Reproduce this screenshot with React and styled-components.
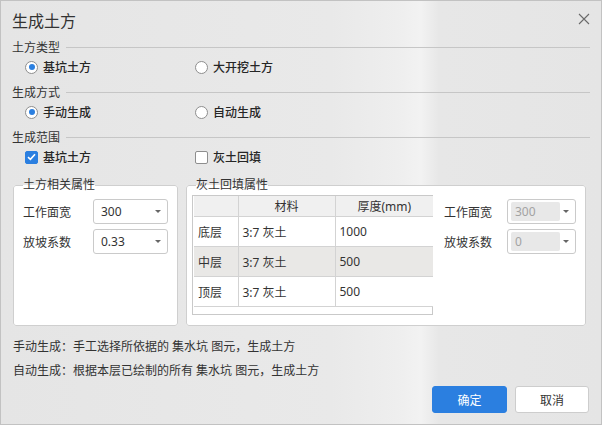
import React from 'react'
import styled, { createGlobalStyle } from 'styled-components'

const GlobalStyle = createGlobalStyle`
  html, body {
    margin: 0;
    padding: 0;
  }
  body {
    font-family: "Noto Sans", "Noto Sans CJK SC", sans-serif;
    color: #333;
  }
`

const Window = styled.div`
  box-sizing: border-box;
  width: 602px;
  height: 425px;
  border: 1px solid #c2c2c2;
  padding: 0 11px;
  background: linear-gradient(90deg, #e5e5e5 0%, #e9e9e9 55%, #eeeeee 66%, #f2f2f2 70%, #e7e7e7 73%, #e5e5e5 100%);
  display: flex;
  flex-direction: column;
  overflow: hidden;
`

const TitleBar = styled.div`
  height: 38px;
  display: flex;
  align-items: center;
  justify-content: space-between;
`

const Title = styled.div`
  font-size: 16px;
  color: #333;
`

const CloseButton = styled.button`
  border: 0;
  background: none;
  padding: 0;
  margin-right: -2px;
  width: 14px;
  height: 14px;
  display: flex;
  cursor: pointer;
`

const SectionHeader = styled.div`
  display: flex;
  align-items: center;
  height: 16px;
  font-size: 12px;
  margin-top: ${p => p.$top || 0}px;

  &::after {
    content: '';
    flex: 1;
    height: 1px;
    background: #c6c6c6;
    margin-left: 6px;
  }
`

const OptionRow = styled.div`
  display: grid;
  grid-template-columns: 170px 1fr;
  height: 24px;
  align-items: center;
  padding-left: 13px;
`

const Option = styled.label`
  display: flex;
  align-items: center;
  font-size: 12px;
  font-weight: 500;
  color: #262626;
  gap: 5px;
`

const RadioMark = styled.span`
  box-sizing: border-box;
  width: 13px;
  height: 13px;
  border-radius: 50%;
  border: 1px solid #8e8e8e;
  background: #fff;
  display: flex;
  align-items: center;
  justify-content: center;

  &::after {
    content: '';
    width: 6px;
    height: 6px;
    border-radius: 50%;
    background: ${p => (p.$checked ? '#2b7fe0' : 'transparent')};
  }
`

const CheckMark = styled.span`
  box-sizing: border-box;
  width: 13px;
  height: 13px;
  border-radius: 2px;
  border: 1px solid ${p => (p.$checked ? '#2b7fe0' : '#8e8e8e')};
  background: ${p => (p.$checked ? '#2b7fe0' : '#fff')};
  display: flex;
  align-items: center;
  justify-content: center;
`

const Groups = styled.div`
  display: flex;
  gap: 8px;
  margin: 8px 4px 0 1px;
`

const Group = styled.fieldset`
  box-sizing: border-box;
  margin: 0;
  padding: 0 9px 0 9px;
  min-width: 0;
  height: 149px;
  width: ${p => p.$width}px;
  flex: ${p => (p.$grow ? 1 : 'none')};
  border: 1px solid #cfcfcf;
  border-radius: 3px;
  background: #fff;
  display: ${p => (p.$row ? 'flex' : 'block')};
  align-items: flex-start;
`

const Legend = styled.legend`
  padding: 0;
  margin-left: 0;
  font-size: 12px;
  line-height: 16px;
  color: #333;
`

const FieldList = styled.div`
  display: flex;
  flex-direction: column;
  gap: 5px;
  padding-top: 6px;
`

const Field = styled.div`
  display: flex;
  align-items: center;
`

const FieldLabel = styled.span`
  width: ${p => p.$width}px;
  font-size: 12px;
  color: #333;
`

const Select = styled.div`
  box-sizing: border-box;
  width: ${p => p.$width}px;
  height: 25px;
  border: 1px solid #cacaca;
  border-radius: 3px;
  background: #fff;
  display: flex;
  align-items: center;
  padding: 0 6px 0 ${p => (p.$disabled ? 3 : 7)}px;
  font-size: 12px;
  color: #333;

  &::after {
    content: '';
    margin-left: auto;
    border-left: 3px solid transparent;
    border-right: 3px solid transparent;
    border-top: 3px solid #666;
  }
`

const DisabledValue = styled.span`
  flex: 0 0 49px;
  height: 19px;
  border-radius: 2px;
  background: #e8e8e8;
  color: #a3a3a3;
  display: flex;
  align-items: center;
  padding-left: 4px;
  box-sizing: border-box;
`

const TableFrame = styled.div`
  box-sizing: border-box;
  width: 241px;
  height: 120px;
  margin: 2px 0 0 -4px;
  border: 1px solid #c9c9c9;
  padding: 0 0 0 1px;
  background: #fff;
`

const Table = styled.table`
  border-collapse: collapse;
  width: 239px;
  font-size: 12px;
  color: #333;
  border-bottom: 1px solid #c9c9c9;

  th, td {
    border: 1px solid #d3d3d3;
    padding: 0 0 0 4px;
    text-align: left;
    font-weight: normal;
  }
  th {
    height: 20px;
    background: #f0f0f0;
    text-align: center;
    padding: 0;
  }
  td {
    height: 29px;
  }
  tr:first-child th {
    border-top: 0;
  }
  tr > *:first-child {
    border-left: 0;
  }
  tr > *:last-child {
    border-right: 0;
  }
`

const Row = styled.tr`
  background: ${p => (p.$shade ? '#e9e8e6' : '#fff')};
`

const SideFields = styled(FieldList)`
  margin-left: 11px;
`

const Note = styled.div`
  font-size: 12px;
  line-height: 24px;
  color: #333;
  padding-left: 1px;
  margin-top: ${p => p.$top || 0}px;
  white-space: pre;
`

const Actions = styled.div`
  display: flex;
  justify-content: flex-end;
  gap: 8px;
  margin: 3px 1px 0 0;
`

const Button = styled.button`
  box-sizing: border-box;
  width: ${p => p.$width}px;
  height: 27px;
  border-radius: 3px;
  font-family: inherit;
  font-size: 12px;
  border: 1px solid ${p => (p.$primary ? '#2b7fe0' : '#cdcdcd')};
  background: ${p => (p.$primary ? '#2b7fe0' : '#fff')};
  color: ${p => (p.$primary ? '#fff' : '#333')};
  cursor: pointer;
`

const Radio = ({ checked, children }) => (
  <Option>
    <RadioMark $checked={checked} />
    {children}
  </Option>
)

const Checkbox = ({ checked, children }) => (
  <Option>
    <CheckMark $checked={checked}>
      {checked && (
        <svg width="9" height="8" viewBox="0 0 9 8">
          <path d="M1 4.2 L3.4 6.4 L8 1.2" fill="none" stroke="#fff" strokeWidth="1.6" />
        </svg>
      )}
    </CheckMark>
    {children}
  </Option>
)

const layers = [
  { name: '底层', material: '3:7 灰土', depth: '1000' },
  { name: '中层', material: '3:7 灰土', depth: '500' },
  { name: '顶层', material: '3:7 灰土', depth: '500' }
]

export default function App() {
  return (
    <>
      <GlobalStyle />
      <Window>
        <TitleBar>
          <Title>生成土方</Title>
          <CloseButton aria-label="关闭">
            <svg width="12" height="12" viewBox="0 0 12 12">
              <path d="M1 1 L11 11 M11 1 L1 11" stroke="#6a6a6a" strokeWidth="1.1" />
            </svg>
          </CloseButton>
        </TitleBar>

        <SectionHeader>土方类型</SectionHeader>
        <OptionRow>
          <Radio checked>基坑土方</Radio>
          <Radio>大开挖土方</Radio>
        </OptionRow>

        <SectionHeader $top={5}>生成方式</SectionHeader>
        <OptionRow>
          <Radio checked>手动生成</Radio>
          <Radio>自动生成</Radio>
        </OptionRow>

        <SectionHeader $top={5}>生成范围</SectionHeader>
        <OptionRow>
          <Checkbox checked>基坑土方</Checkbox>
          <Checkbox>灰土回填</Checkbox>
        </OptionRow>

        <Groups>
          <Group $width={165}>
            <Legend>土方相关属性</Legend>
            <FieldList>
              <Field>
                <FieldLabel $width={70}>工作面宽</FieldLabel>
                <Select $width={75}>300</Select>
              </Field>
              <Field>
                <FieldLabel $width={70}>放坡系数</FieldLabel>
                <Select $width={75}>0.33</Select>
              </Field>
            </FieldList>
          </Group>

          <Group $grow $row>
            <Legend>灰土回填属性</Legend>
            <TableFrame>
              <Table>
                <colgroup>
                  <col style={{ width: 44 }} />
                  <col style={{ width: 97 }} />
                  <col />
                </colgroup>
                <thead>
                  <tr>
                    <th />
                    <th>材料</th>
                    <th>厚度(mm)</th>
                  </tr>
                </thead>
                <tbody>
                  {layers.map((l, i) => (
                    <Row key={l.name} $shade={i === 1}>
                      <td>{l.name}</td>
                      <td>{l.material}</td>
                      <td>{l.depth}</td>
                    </Row>
                  ))}
                </tbody>
              </Table>
            </TableFrame>
            <SideFields>
              <Field>
                <FieldLabel $width={63}>工作面宽</FieldLabel>
                <Select $width={69} $disabled>
                  <DisabledValue>300</DisabledValue>
                </Select>
              </Field>
              <Field>
                <FieldLabel $width={63}>放坡系数</FieldLabel>
                <Select $width={69} $disabled>
                  <DisabledValue>0</DisabledValue>
                </Select>
              </Field>
            </SideFields>
          </Group>
        </Groups>

        <Note $top={9}>手动生成：手工选择所依据的 集水坑 图元，生成土方</Note>
        <Note>自动生成：根据本层已绘制的所有 集水坑 图元，生成土方</Note>

        <Actions>
          <Button $primary $width={75}>确定</Button>
          <Button $width={74}>取消</Button>
        </Actions>
      </Window>
    </>
  )
}
